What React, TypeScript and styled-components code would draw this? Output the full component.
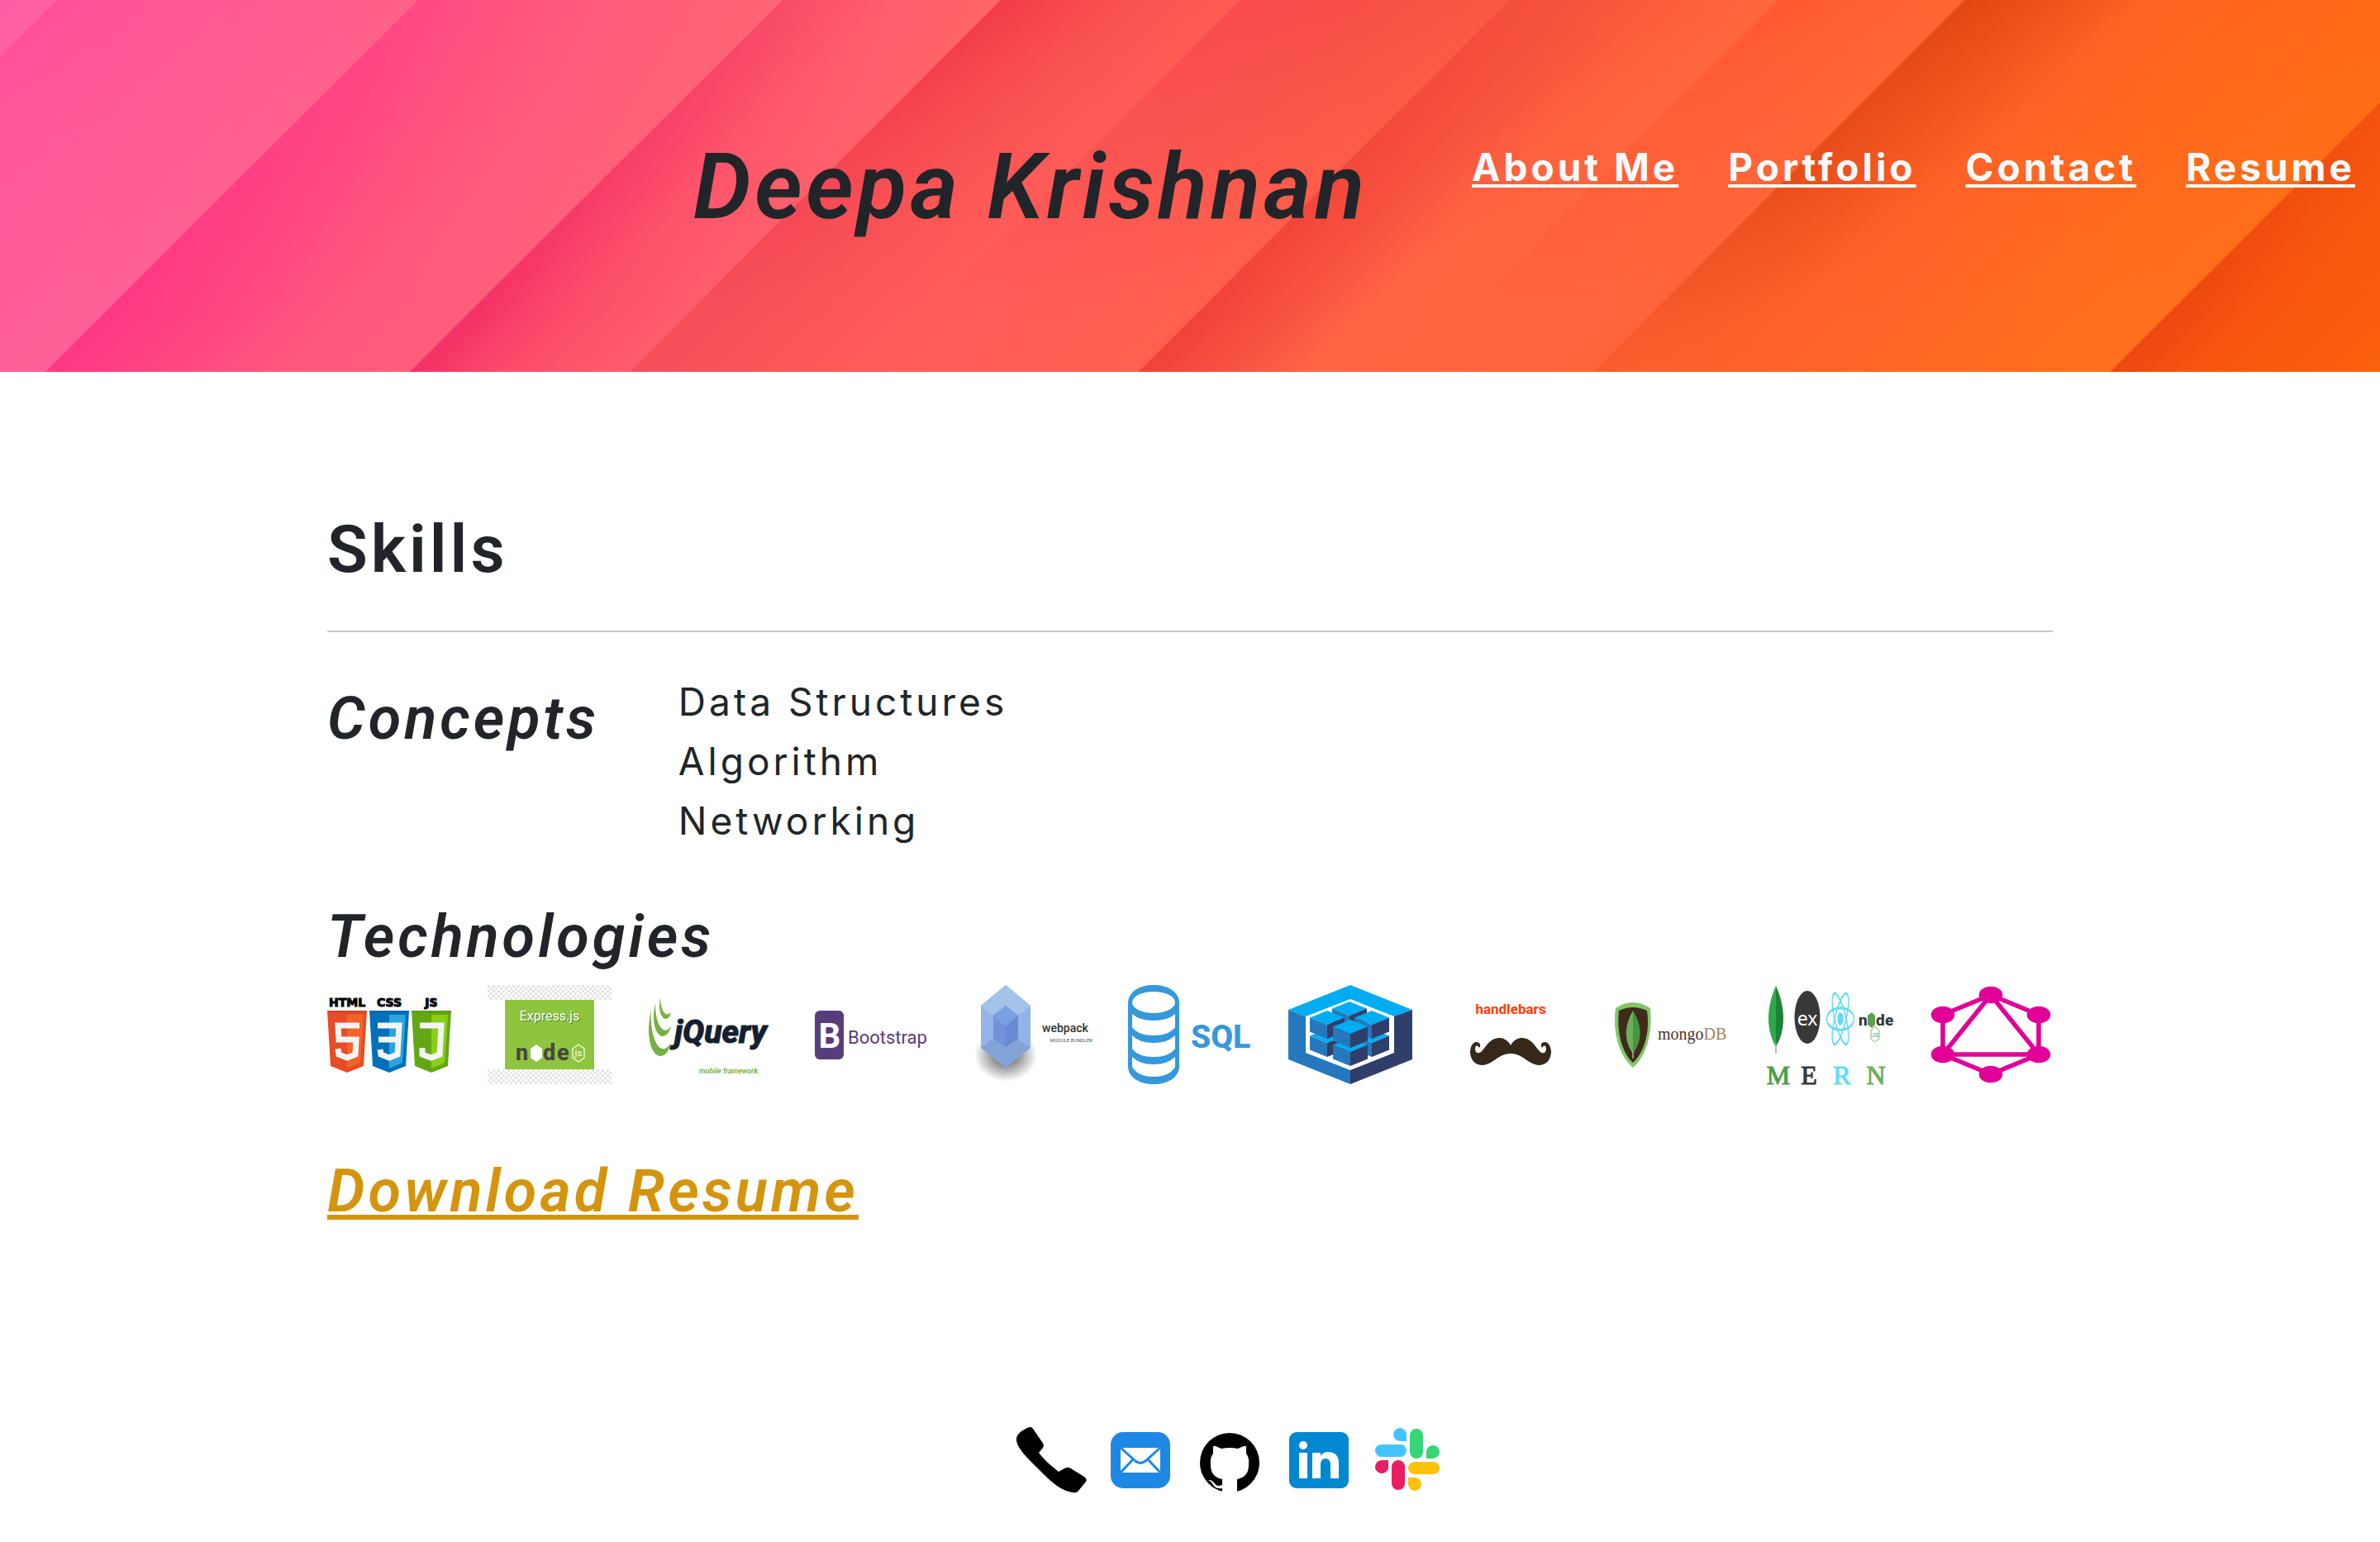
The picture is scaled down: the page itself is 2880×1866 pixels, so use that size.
import React from 'react';
import styled, { createGlobalStyle } from 'styled-components';

const ink = '#212529';
const logoSans = 'Roboto, sans-serif';
const serif = '"Liberation Serif", serif';

const GlobalStyle = createGlobalStyle`
  *, *::before, *::after { box-sizing: border-box; }
  body {
    margin: 0;
    background: #fff;
    color: ${ink};
    font-family: Inter, "Liberation Sans", sans-serif;
    font-size: 46px;
    line-height: 72px;
    letter-spacing: 4px;
  }
`;

const Header = styled.header`
  position: relative;
  display: flex;
  justify-content: flex-end;
  align-items: flex-start;
  gap: 126px;
  min-height: 450px;
  padding: 160px 30px 0;
  overflow: hidden;
`;

const Backdrop = styled.svg`
  position: absolute;
  inset: 0;
  width: 100%;
  height: 100%;
  z-index: -1;
`;

const Title = styled.h1`
  margin: 0;
  font-family: Roboto, sans-serif;
  font-size: 111px;
  font-weight: 600;
  font-style: italic;
  line-height: 132px;
`;

const Nav = styled.nav`
  display: flex;
  gap: 60px;
  padding-top: 6px;
`;

const NavLink = styled.a`
  color: #fafafa;
  font-weight: 700;
  text-decoration: underline;
  text-decoration-thickness: 4px;
  text-underline-offset: 4px;
  text-decoration-skip-ink: none;
`;

const Main = styled.main`
  max-width: 2088px;
  margin: 0 auto;
  padding-top: 167px;
`;

const SectionTitle = styled.h2`
  margin: 0;
  font-family: Roboto, sans-serif;
  font-size: 80px;
  font-weight: 600;
  line-height: 96px;
`;

const SubTitle = styled.h3`
  margin: 0;
  font-family: Roboto, sans-serif;
  font-size: 72px;
  font-weight: 600;
  font-style: italic;
  line-height: 84px;
`;

const Rule = styled.hr`
  height: 2px;
  margin: 50px 0 0;
  border: 0;
  background: #c8c9ca;
`;

const Concepts = styled.section`
  display: flex;
  gap: 96px;
  padding-top: 48px;
`;

const ConceptTitle = styled(SubTitle)`
  padding-top: 15px;
`;

const ConceptList = styled.ul`
  margin: 0;
  padding: 0;
  list-style: none;
`;

const Technologies = styled.section`
  padding-top: 63px;
`;

const LogoRow = styled.div`
  display: flex;
  justify-content: space-between;
  padding-top: 16px;
`;

const Logo = styled.svg`
  width: 150px;
  height: 120px;
  overflow: visible;
  letter-spacing: 0;
`;

const Download = styled.div`
  padding-top: 88px;
`;

const DownloadLink = styled.a`
  color: #d4940c;
  text-decoration: underline;
  text-decoration-thickness: 6px;
  text-underline-offset: 4px;
  text-decoration-skip-ink: none;
`;

const Footer = styled.footer`
  display: flex;
  justify-content: center;
  gap: 12px;
  padding: 235px 0 48px 96px;
`;

const ContactLink = styled.a`
  display: block;
  width: 96px;
  height: 96px;
`;

const ContactIcon = styled.svg`
  display: block;
  width: 100%;
  height: 100%;
`;

type Stop = [at: number, color: string];

const topStops: Stop[] = [
  [0, '#ff5ea6'], [68, '#ff62a2'], [70, '#ff5098'], [250, '#ff5a96'], [505, '#ff6288'],
  [507, '#ff4a84'], [700, '#ff5a7c'], [946, '#ff6676'],
  [948, '#fa4c6a'], [1080, '#ff5e6c'], [1210, '#ff6668'],
  [1212, '#f23c48'], [1360, '#fa5250'], [1500, '#ff5c54'],
  [1503, '#f84c4e'], [1650, '#f85048'], [1824, '#fb5a42'],
  [1828, '#f44e3c'], [1980, '#fb5a3c'], [2148, '#ff683c'],
  [2155, '#ff5a30'], [2376, '#ff6634'],
  [2379, '#e44814'], [2470, '#ee5018'], [2600, '#ff6424'], [2880, '#ff6a14'], [3003, '#ff6c14'],
  [3006, '#f4580e'], [3330, '#fc640e'],
];

const bottomStops: Stop[] = [
  [0, '#ff56a0'], [300, '#ff5c9c'], [504, '#ff6096'],
  [506, '#ff3684'], [620, '#ff4482'], [800, '#ff587e'], [945, '#ff5e7c'],
  [947, '#f43066'], [1060, '#fc4c6a'], [1211, '#ff5c6c'],
  [1213, '#f64e5c'], [1380, '#fc5658'], [1500, '#ff5c5a'], [1700, '#ff5e54'], [1826, '#ff604e'],
  [1829, '#f0423a'], [1910, '#f64e40'], [2030, '#ff6444'], [2376, '#ff643a'],
  [2379, '#fa5c2e'], [2500, '#ff602c'], [2750, '#ff6824'], [3002, '#ff701c'],
  [3005, '#ee4810'], [3100, '#f65410'], [3330, '#fc620c'],
];

function StripeGradient({ id, stops }: { id: string; stops: Stop[] }) {
  return (
    <linearGradient id={id} gradientUnits="userSpaceOnUse" x1="0" y1="0" x2="1665" y2="1665">
      {stops.map(([at, color]) => (
        <stop key={at} offset={at / 3330} stopColor={color} />
      ))}
    </linearGradient>
  );
}

function Stripes() {
  return (
    <Backdrop viewBox="0 0 2880 450" preserveAspectRatio="none" aria-hidden="true">
      <defs>
        <StripeGradient id="stripesTop" stops={topStops} />
        <StripeGradient id="stripesBottom" stops={bottomStops} />
        <linearGradient id="fade" x1="0" y1="0" x2="0" y2="1">
          <stop offset="0" stopColor="#000" />
          <stop offset="0.85" stopColor="#fff" />
        </linearGradient>
        <mask id="fadeMask">
          <rect width="2880" height="450" fill="url(#fade)" />
        </mask>
        <linearGradient id="shade" gradientUnits="userSpaceOnUse" x1="1189" y1="1189" x2="1270" y2="1270">
          <stop offset="0" stopColor="#e04a18" stopOpacity="0.55" />
          <stop offset="1" stopColor="#e04a18" stopOpacity="0" />
        </linearGradient>
        <radialGradient id="shadeFade" gradientUnits="userSpaceOnUse" cx="2180" cy="200" r="300">
          <stop offset="0" stopColor="#fff" />
          <stop offset="1" stopColor="#000" />
        </radialGradient>
        <mask id="shadeMask">
          <rect width="2880" height="450" fill="url(#shadeFade)" />
        </mask>
      </defs>
      <rect width="2880" height="450" fill="url(#stripesTop)" />
      <rect width="2880" height="450" fill="url(#stripesBottom)" mask="url(#fadeMask)" />
      <g mask="url(#shadeMask)">
        <path d="M2378 0H2600L2150 450H1928Z" fill="url(#shade)" />
      </g>
    </Backdrop>
  );
}

function Shield({ x, dark, light, deep, children }: { x: number; dark: string; light: string; deep: string; children: React.ReactNode }) {
  return (
    <g transform={`translate(${x} 0)`}>
      <path d="M0 31H48L44 98L24 106L4 98Z" fill={dark} />
      <path d="M24 36H44L40 94L24 101Z" fill={light} />
      <path d="M0 31H48V33H0Z" fill={deep} />
      {children}
    </g>
  );
}

function WebLogo() {
  return (
    <Logo viewBox="0 0 150 120" role="img" aria-label="HTML, CSS and JS">
      <g fontFamily='"DejaVu Sans", sans-serif' fontWeight="700" fontSize="14" fill="#000" stroke="#000" strokeWidth="1" textAnchor="middle">
        <text x="24" y="26">HTML</text>
        <text x="75" y="26">CSS</text>
        <text x="126" y="26">JS</text>
      </g>
      <Shield x={0} dark="#e44d26" light="#f16529" deep="#d8431f">
        <path d="M39 49H13L14 66H35L34 84L24 88L14 84L13 77" fill="none" stroke="#f4f4f4" strokeWidth="7" />
      </Shield>
      <Shield x={51} dark="#0070ba" light="#2aa5dc" deep="#0065ab">
        <path d="M10 49H36L34 84L24 88L14 84L13 78M11 66H34" fill="none" stroke="#f4f4f4" strokeWidth="7" />
      </Shield>
      <Shield x={102} dark="#63a814" light="#88cf16" deep="#5a9a12">
        <path d="M10 49H36L34 84L24 88L13 84V76" fill="none" stroke="#f4f4f4" strokeWidth="7" />
      </Shield>
    </Logo>
  );
}

function ExpressLogo() {
  return (
    <Logo viewBox="0 0 150 120" role="img" aria-label="Express.js and Node.js">
      <defs>
        <pattern id="checker" width="6" height="6" patternUnits="userSpaceOnUse">
          <rect width="6" height="6" fill="#fff" />
          <path d="M0 0H3V3H0ZM3 3H6V6H3Z" fill="#e4e4e4" />
        </pattern>
      </defs>
      <rect width="150" height="18" fill="url(#checker)" />
      <rect y="102" width="150" height="18" fill="url(#checker)" />
      <rect x="21" y="18" width="108" height="84" fill="#8fc43f" />
      <g fontFamily={logoSans} fontSize="16" textAnchor="middle">
        <text x="76" y="44" fill="#4e7a1b">Express.js</text>
        <text x="75" y="43" fill="#fff">Express.js</text>
      </g>
      <g fontFamily={logoSans} fontWeight="800" fontSize="27" fill="#46483e">
        <text x="34" y="91">n</text>
        <text x="67" y="91">d</text>
        <text x="84" y="91">e</text>
      </g>
      <path d="M59 72L66 77V88L59 93L52 88V77Z" fill="#fff" />
      <path d="M110 72L117 77V88L110 93L103 88V77Z" fill="none" stroke="#e8f4d4" strokeWidth="1.5" />
      <text x="110" y="86" textAnchor="middle" fontFamily={logoSans} fontSize="11" fill="#fff">js</text>
    </Logo>
  );
}

function JQueryLogo() {
  return (
    <Logo viewBox="0 0 150 120" role="img" aria-label="jQuery mobile framework">
      <g fill="#76b043">
        <path d="M4 31C-3 58 3 84 14 86C22 86 25 80 27 71C21 80 15 79 10 70C5 60 3 46 4 31Z" />
        <path d="M9 22C4 43 9 60 17 62C23 62 26 57 28 50C23 57 19 56 14 49C10 41 9 32 9 22Z" />
        <path d="M15 15C12 29 16 40 21 41C25 41 27 38 28 33C24 37 21 36 18 31C16 26 15 21 15 15Z" />
      </g>
      <text x="32" y="70" fontFamily={logoSans} fontSize="39" fontWeight="800" fontStyle="italic" fill="#14202e" stroke="#14202e" strokeWidth="1">jQuery</text>
      <text x="62" y="107" fontFamily={logoSans} fontSize="9" fontWeight="600" fontStyle="italic" fill="#76b043">mobile framework.</text>
    </Logo>
  );
}

function BootstrapLogo() {
  return (
    <Logo viewBox="0 0 150 120" role="img" aria-label="Bootstrap">
      <rect x="9" y="31" width="35" height="59" rx="6" fill="#563d7c" />
      <text x="27" y="76" textAnchor="middle" fontFamily={logoSans} fontSize="42" fontWeight="700" fill="#fff">B</text>
      <text x="49" y="71" fontFamily={logoSans} fontSize="22" fill="#563d7c">Bootstrap</text>
    </Logo>
  );
}

function WebpackLogo() {
  return (
    <Logo viewBox="0 0 150 120" role="img" aria-label="webpack module bundler">
      <defs>
        <radialGradient id="packShadow">
          <stop offset="0.3" stopColor="#000" stopOpacity="0.5" />
          <stop offset="1" stopColor="#000" stopOpacity="0" />
        </radialGradient>
      </defs>
      <ellipse cx="46" cy="85" rx="38" ry="32" fill="url(#packShadow)" />
      <path d="M46 0L76 25V76L46 100L16 76V25Z" fill="#93b4e6" />
      <path d="M46 0L76 25L61 37L46 25L31 37L16 25Z" fill="#a5c2ea" />
      <path d="M16 76L31 65L46 75L61 65L76 76L46 100Z" fill="#83a2d6" />
      <path d="M46 25L61 37V65L46 75L31 65V37Z" fill="#6f94da" />
      <path d="M46 25L61 37L46 50L31 37Z" fill="#7ba0e2" />
      <path d="M46 50L61 37V65L46 75Z" fill="#688cd2" />
      <text x="90" y="57" fontFamily={logoSans} fontSize="14" fontWeight="500" fill="#333">webpack</text>
      <text x="151" y="69" textAnchor="end" fontFamily={logoSans} fontSize="6" fill="#555">MODULE BUNDLER</text>
    </Logo>
  );
}

function SqlLogo() {
  return (
    <Logo viewBox="0 0 150 120" role="img" aria-label="SQL">
      <path d="M0 22C0 8 14 0 31 0S62 8 62 22V98C62 112 48 120 31 120S0 112 0 98Z" fill="#3498db" />
      <g fill="#fff">
        <ellipse cx="31" cy="21" rx="26" ry="13" />
        <path d="M5 35Q14 43 31 43T57 35V51Q50 61 31 61T5 51Z" />
        <path d="M5 61Q14 70 31 70T57 61V77Q50 87 31 87T5 77Z" />
        <path d="M5 87Q14 96 31 96T57 87V99Q50 111 31 111T5 99Z" />
      </g>
      <text x="76" y="76" fontFamily={logoSans} fontSize="39" fontWeight="800" fill="#3498db">SQL</text>
    </Logo>
  );
}

function Cube({ x, y }: { x: number; y: number }) {
  return (
    <g transform={`translate(${x} ${y})`}>
      <path d="M0 0L21 8.5L0 17L-21 8.5Z" fill="#00adf2" />
      <path d="M-21 8.5L0 17V34L-21 25.5Z" fill="#2578bd" />
      <path d="M21 8.5L0 17V34L21 25.5Z" fill="#2f3f69" />
    </g>
  );
}

function CubeLogo() {
  return (
    <Logo viewBox="0 0 150 120" role="img" aria-label="Module cubes">
      <path d="M75 0L150 30L128 38L75 17L21 38L0 30Z" fill="#00adf2" />
      <path d="M0 30L21 38V82L75 103V120L0 90Z" fill="#2578bd" />
      <path d="M150 30L128 38V82L75 103V120L150 90Z" fill="#2f3f69" />
      <path d="M75 44L96 56V80L75 86L54 80V56Z" fill="#2578bd" />
      <Cube x={47} y={53} />
      <Cube x={101} y={53} />
      <Cube x={75} y={64} />
      <Cube x={74} y={20} />
      <Cube x={47} y={31} />
      <Cube x={101} y={31} />
      <Cube x={75} y={42} />
    </Logo>
  );
}

const mustacheHalf = 'M75 73C71 66 66 64 61 64C51 64 46 73 41 79C37 84 32 83 32 77C32 73 35 72 37 76C40 72 37 69 33 69C28 70 26 76 26 82C27 92 33 97 41 97C54 96 60 83 75 83Z';

function HandlebarsLogo() {
  return (
    <Logo viewBox="0 0 150 120" role="img" aria-label="handlebars">
      <text x="75" y="35" textAnchor="middle" fontFamily={logoSans} fontSize="17" fontWeight="800" fill="#ff4413">handlebars</text>
      <g fill="#35281a">
        <path d={mustacheHalf} />
        <path d={mustacheHalf} transform="translate(150 0) scale(-1 1)" />
      </g>
    </Logo>
  );
}

function MongoLogo() {
  return (
    <Logo viewBox="0 0 150 120" role="img" aria-label="mongoDB">
      <path d="M9 28Q30 14 51 28C54 60 46 86 30 100C14 86 5 60 9 28Z" fill="#82c765" />
      <path d="M13 31Q30 23 47 31C51 58 43 82 30 94C17 82 10 58 13 31Z" fill="#3f2a1c" />
      <path d="M30 31C42 50 41 68 30 83Z" fill="#479643" />
      <path d="M30 31C19 50 19 68 30 83Z" fill="#6cb158" />
      <path d="M30 80V89" stroke="#b7ab98" strokeWidth="1.5" />
      <text x="60" y="66" fontFamily={serif} fontSize="20" fill="#4b3429">mongo<tspan fill="#a08158">DB</tspan></text>
    </Logo>
  );
}

function MernLogo() {
  return (
    <Logo viewBox="0 0 150 120" role="img" aria-label="MERN">
      <path d="M9 1C-3 28 -3 54 9 75Z" fill="#2fa84a" />
      <path d="M9 1C21 28 21 54 9 75Z" fill="#1c8336" />
      <path d="M9 70V83" stroke="#b0a58f" strokeWidth="1.5" />
      <ellipse cx="47" cy="39" rx="15.5" ry="32" fill="#383838" />
      <text x="47" y="49" textAnchor="middle" fontFamily='"Noto Sans", sans-serif' fontSize="23" fill="#fff">ex</text>
      <g transform="translate(87 41) scale(1.5 3.15)" fill="none" stroke="#61dafb" strokeWidth="0.9">
        <ellipse rx="11" ry="4.2" />
        <ellipse rx="11" ry="4.2" transform="rotate(60)" />
        <ellipse rx="11" ry="4.2" transform="rotate(120)" />
        <circle r="2" fill="#61dafb" />
      </g>
      <g fontFamily={logoSans} fontWeight="800" fontSize="19" fill="#333">
        <text x="109" y="49">n</text>
        <text x="130" y="49">d</text>
        <text x="141" y="49">e</text>
      </g>
      <path d="M125 33L129 37V48L125 52L120 48V37Z" fill="#5fa04e" />
      <path d="M129 50L134 55V65L129 69L124 65V55Z" fill="none" stroke="#7fb86f" strokeWidth="1" />
      <text x="129" y="63" textAnchor="middle" fontFamily={logoSans} fontSize="8" fill="#5fa04e">JS</text>
      <g fontFamily={serif} fontSize="32" textAnchor="middle" strokeWidth="1">
        <text x="12" y="120" fill="#4c9f48" stroke="#4c9f48">M</text>
        <text x="49" y="120" fill="#383838" stroke="#383838">E</text>
        <text x="89" y="120" fill="#61dafb" stroke="#61dafb">R</text>
        <text x="130" y="120" fill="#6fae5c" stroke="#6fae5c">N</text>
      </g>
    </Logo>
  );
}

const graphNodes = [[75, 12], [133, 36], [133, 84], [75, 108], [17, 84], [17, 36]];

function GraphLogo() {
  return (
    <Logo viewBox="0 0 150 120" role="img" aria-label="GraphQL">
      <path d="M75 12L133 36V84L75 108L17 84V36ZM75 12L133 84H17Z" fill="none" stroke="#e10098" strokeWidth="5.5" />
      {graphNodes.map(([x, y]) => (
        <ellipse key={`${x}-${y}`} cx={x} cy={y} rx="14.3" ry="10.3" fill="#e10098" />
      ))}
    </Logo>
  );
}

function PhoneIcon() {
  return (
    <ContactIcon viewBox="0 0 96 96" aria-hidden="true">
      <path d="M17 10C21 8 24 7 26 10L37 26Q40 29 38 33L33 39C40 48 48 55 57 62L64 58Q68 56 71 57.500L88 68Q92 71 90 74L81 85Q79 88 74 87C62 85 52 78 40 66C22 48 6 34 6 23Q6 19 8 17Q12 12 17 10Z" fill="#000" />
    </ContactIcon>
  );
}

function MailIcon() {
  return (
    <ContactIcon viewBox="0 0 96 96" aria-hidden="true">
      <rect x="12" y="14" width="72" height="68" rx="15" fill="#1e88e5" />
      <rect x="24" y="33" width="48" height="30" fill="#fff" />
      <path d="M23 32L42 49Q48 54 54 49L73 32M23 64L39 47M73 64L57 47" fill="none" stroke="#1e88e5" strokeWidth="3" />
    </ContactIcon>
  );
}

function GithubIcon() {
  return (
    <ContactIcon viewBox="0 0 96 96" aria-hidden="true">
      <circle cx="48" cy="51" r="36" fill="#000" />
      <path
        d="M28 32Q28 30 31 31L38 34Q48 32 58 34L65 31Q68 30 68 32V40Q72 45 71 54C71 64 66 69 57 71V90H39V82C32 83 29 80 27 76Q25 73 22 72C29 71 29 78 34 79Q37 79 39 78V71C30 69 25 64 25 54Q24 45 28 40Z"
        fill="#fff"
      />
    </ContactIcon>
  );
}

function LinkedinIcon() {
  return (
    <ContactIcon viewBox="0 0 96 96" aria-hidden="true">
      <rect x="12" y="14" width="72" height="68" rx="9" fill="#0288d1" />
      <g fill="#fff">
        <circle cx="29" cy="30" r="5" />
        <path d="M24 39H34V70H24Z" />
        <path d="M40 39H50V43Q53 38 59 38Q72 38 72 52V70H62V54Q62 46 56 46Q50 46 50 54V70H40Z" />
      </g>
    </ContactIcon>
  );
}

function SlackIcon() {
  return (
    <ContactIcon viewBox="0 0 96 96" aria-hidden="true">
      <g fill="#42c5ff">
        <rect x="8" y="29" width="38" height="15" rx="7.5" />
        <path d="M46 25V18A8 8 0 1 0 38 25Z" />
      </g>
      <g fill="#36d576">
        <rect x="50" y="10" width="16" height="36" rx="8" />
        <path d="M70 46V39A8 8 0 1 1 78 46Z" />
      </g>
      <g fill="#ffc10a">
        <rect x="48" y="50" width="38" height="15" rx="7.5" />
        <path d="M48 69V76A8 8 0 1 0 56 69Z" />
      </g>
      <g fill="#ea1e63">
        <rect x="28" y="48" width="16" height="36" rx="8" />
        <path d="M24 48V55A8 8 0 1 1 16 48Z" />
      </g>
    </ContactIcon>
  );
}

const navItems = ['About Me', 'Portfolio', 'Contact', 'Resume'];
const concepts = ['Data Structures', 'Algorithm', 'Networking'];
const contacts = [
  { label: 'Phone', Icon: PhoneIcon },
  { label: 'Email', Icon: MailIcon },
  { label: 'GitHub', Icon: GithubIcon },
  { label: 'LinkedIn', Icon: LinkedinIcon },
  { label: 'Slack', Icon: SlackIcon },
];

export default function App() {
  return (
    <>
      <GlobalStyle />
      <Header>
        <Stripes />
        <Title>Deepa Krishnan</Title>
        <Nav>
          {navItems.map((item) => (
            <NavLink key={item} href="#">{item}</NavLink>
          ))}
        </Nav>
      </Header>
      <Main>
        <SectionTitle>Skills</SectionTitle>
        <Rule />
        <Concepts>
          <ConceptTitle>Concepts</ConceptTitle>
          <ConceptList>
            {concepts.map((concept) => (
              <li key={concept}>{concept}</li>
            ))}
          </ConceptList>
        </Concepts>
        <Technologies>
          <SubTitle>Technologies</SubTitle>
          <LogoRow>
            <WebLogo />
            <ExpressLogo />
            <JQueryLogo />
            <BootstrapLogo />
            <WebpackLogo />
            <SqlLogo />
            <CubeLogo />
            <HandlebarsLogo />
            <MongoLogo />
            <MernLogo />
            <GraphLogo />
          </LogoRow>
        </Technologies>
        <Download>
          <SubTitle>
            <DownloadLink href="#">Download Resume</DownloadLink>
          </SubTitle>
        </Download>
      </Main>
      <Footer>
        {contacts.map(({ label, Icon }) => (
          <ContactLink key={label} href="#" aria-label={label}>
            <Icon />
          </ContactLink>
        ))}
      </Footer>
    </>
  );
}
